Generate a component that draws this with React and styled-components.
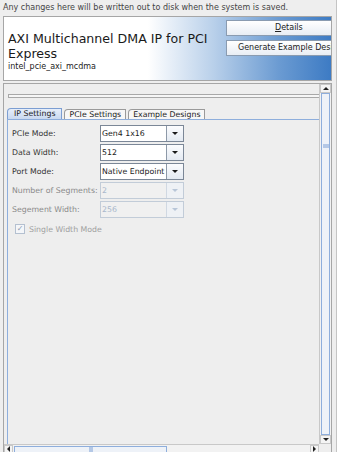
import React from 'react';
import styled, { createGlobalStyle } from 'styled-components';

const Global = createGlobalStyle`
  html, body { margin: 0; padding: 0; background: #eeeeee; }
  * { box-sizing: border-box; }
`;

const Window = styled.div`
  position: relative;
  width: 337px;
  height: 452px;
  overflow: hidden;
  background: #eeeeee;
  font-family: "DejaVu Sans", Verdana, sans-serif;
  color: #333;
  display: flex;
  flex-direction: column;
  border-right: 1px solid #c4c4c4;
`;

const Notice = styled.div`
  height: 16px;
  padding: 3px 0 0 3px;
  font-size: 8px;
  line-height: 10px;
  color: #444;
  white-space: nowrap;
`;

const Header = styled.div`
  margin: 0 4px 0 3px;
  height: 65px;
  border: 1px solid #a6a6a6;
  background: linear-gradient(to right, #ffffff 0%, #ffffff 44%, #b9d0ea 64%, #6b9bd2 84%, #3d7bc4 100%);
  display: flex;
  overflow: hidden;
`;

const TitleBlock = styled.div`
  flex: 1;
  padding: 14px 0 0 4px;
`;

const Title = styled.div`
  font-size: 12.6px;
  line-height: 15px;
  color: #1a1a1a;
  width: 210px;
`;

const Sub = styled.div`
  font-size: 8px;
  line-height: 10px;
  margin-top: 1px;
  color: #222;
`;

const ButtonCol = styled.div`
  width: 105px;
  padding-top: 3px;
  display: flex;
  flex-direction: column;
  gap: 4px;
  flex-shrink: 0;
`;

const HeadButton = styled.div`
  width: 115px;
  height: 16px;
  border: 1px solid #8a9bb0;
  background: linear-gradient(#ffffff, #e8edf4);
  font-size: 8px;
  line-height: 14px;
  color: #222;
  white-space: nowrap;
  padding-left: ${p => p.$pad}px;
`;

const ScrollPane = styled.div`
  margin: 2px 4px 0 3px;
  flex: 1;
  border: 1px solid #a6a6a6;
  border-bottom: none;
  display: grid;
  grid-template-columns: 1fr 12px;
  grid-template-rows: 1fr 8px;
  min-height: 0;
  background: #eeeeee;
`;

const Viewport = styled.div`
  overflow: hidden;
  position: relative;
`;

const Content = styled.div`
  width: 420px;
  padding: 10px 0 0 3px;
  height: 100%;
  display: flex;
  flex-direction: column;
`;

const ThinBar = styled.div`
  margin-left: 1px;
  height: 4px;
  border: 1px solid #a8a8a8;
  background: #f6f6f6;
`;

const TabStrip = styled.div`
  margin-top: 10px;
  display: flex;
  align-items: flex-end;
  height: 11px;
`;

const Tab = styled.div`
  height: ${p => (p.$active ? 11 : 10)}px;
  margin-right: 2px;
  padding: 0 ${p => p.$px}px;
  font-size: 7.8px;
  line-height: 9px;
  color: #222;
  white-space: nowrap;
  border: 1px solid ${p => (p.$active ? '#7c9ed2' : '#9a9a9a')};
  border-bottom: none;
  border-top-left-radius: 4px 4px;
  background: ${p => (p.$active ? 'linear-gradient(#e6eefa, #c9d9f0)' : '#f7f7f7')};
`;

const TabPanel = styled.div`
  flex: 1;
  border-top: 1px solid #8eaedc;
  border-left: 1px solid #8eaedc;
  padding: 5px 0 0 4px;
`;

const Form = styled.div`
  display: grid;
  grid-template-columns: 88px 84px;
  grid-auto-rows: 17px;
  row-gap: 2px;
  align-items: center;
`;

const Label = styled.div`
  font-size: 7.8px;
  color: ${p => (p.$disabled ? '#8a8a8a' : '#333')};
  white-space: nowrap;
`;

const Combo = styled.div`
  height: 17px;
  display: flex;
  border: 1px solid ${p => (p.$disabled ? '#c2ccd8' : '#7b8797')};
  background: ${p => (p.$disabled ? '#f0f0f0' : '#ffffff')};
`;

const ComboText = styled.div`
  flex: 1;
  font-size: 7.8px;
  line-height: 15px;
  padding-left: 1px;
  color: ${p => (p.$disabled ? '#aab8cc' : '#222')};
  white-space: nowrap;
  overflow: hidden;
`;

const ComboArrow = styled.div`
  width: 17px;
  border-left: 1px solid ${p => (p.$disabled ? '#d0d8e2' : '#8d99a8')};
  background: ${p => (p.$disabled ? '#eef1f5' : 'linear-gradient(#fbfcfe, #e4eaf2)')};
  display: flex;
  align-items: center;
  justify-content: center;
`;

const Tri = styled.div`
  width: 0;
  height: 0;
  border-left: 3.5px solid transparent;
  border-right: 3.5px solid transparent;
  border-top: 3.5px solid ${p => (p.$disabled ? '#b8c6d8' : '#1a1a1a')};
  border-bottom: none;
`;

const CheckRow = styled.div`
  margin-top: 6px;
  margin-left: 3px;
  display: flex;
  align-items: center;
  gap: 4px;
  font-size: 7.8px;
  color: #a0a0a0;
`;

const CheckBox = styled.div`
  width: 10px;
  height: 10px;
  border: 1px solid #b4c0d0;
  background: #f4f6f9;
  font-size: 8px;
  line-height: 8px;
  color: #8a9ab0;
  text-align: center;
`;

const VBar = styled.div`
  border-left: 1px solid #c8c8c8;
  display: flex;
  flex-direction: column;
  background: #f2f2f2;
`;

const ArrowBtn = styled.div`
  height: ${p => p.$h || 9}px;
  width: ${p => p.$w || 'auto'};
  display: flex;
  align-items: center;
  justify-content: center;
  background: #f4f4f4;
  border: 1px solid #c8c8c8;
`;

const UpTri = styled.div`
  width: 0;
  height: 0;
  border-left: 3px solid transparent;
  border-right: 3px solid transparent;
  border-bottom: 3px solid #222;
`;

const DownTri = styled(UpTri)`
  border-bottom: none;
  border-top: 3px solid #222;
`;

const LeftTri = styled.div`
  width: 0;
  height: 0;
  border-top: 3px solid transparent;
  border-bottom: 3px solid transparent;
  border-right: 3px solid #222;
`;

const RightTri = styled(LeftTri)`
  border-right: none;
  border-left: 3px solid #222;
`;

const VTrack = styled.div`
  flex: 1;
  padding: 0 1px;
`;

const VThumb = styled.div`
  height: 100%;
  border: 1px solid #8eaedc;
  background: #eef2f8;
  padding-top: 50px;
  display: flex;
  justify-content: center;
`;

const Grip = styled.div`
  width: ${p => p.$w}px;
  height: ${p => p.$h}px;
  background: #b4c8e6;
`;

const HBar = styled.div`
  border-top: 1px solid #c8c8c8;
  display: flex;
  background: #f2f2f2;
`;

const HTrack = styled.div`
  flex: 1;
  padding: 1px 1px 0;
`;

const HThumb = styled.div`
  width: 153px;
  height: 100%;
  border: 1px solid #8eaedc;
  border-bottom: none;
  background: #eef2f8;
  padding-left: 74px;
`;

const Corner = styled.div`
  background: #eeeeee;
`;

const rows = [
  { label: 'PCIe Mode:', value: 'Gen4 1x16' },
  { label: 'Data Width:', value: '512' },
  { label: 'Port Mode:', value: 'Native Endpoint' },
  { label: 'Number of Segments:', value: '2', disabled: true },
  { label: 'Segement Width:', value: '256', disabled: true },
];

export default function App() {
  return (
    <>
      <Global />
      <Window>
        <Notice>Any changes here will be written out to disk when the system is saved.</Notice>
        <Header>
          <TitleBlock>
            <Title>AXI Multichannel DMA IP for PCI Express</Title>
            <Sub>intel_pcie_axi_mcdma</Sub>
          </TitleBlock>
          <ButtonCol>
            <HeadButton $pad={48}><u>D</u>etails</HeadButton>
            <HeadButton $pad={11}>Generate Example Design</HeadButton>
          </ButtonCol>
        </Header>
        <ScrollPane>
          <Viewport>
            <Content>
              <ThinBar />
              <TabStrip>
                <Tab $active $px={6}>IP Settings</Tab>
                <Tab $px={4}>PCIe Settings</Tab>
                <Tab $px={4}>Example Designs</Tab>
              </TabStrip>
              <TabPanel>
                <Form>
                  {rows.map(r => (
                    <React.Fragment key={r.label}>
                      <Label $disabled={r.disabled}>{r.label}</Label>
                      <Combo $disabled={r.disabled}>
                        <ComboText $disabled={r.disabled}>{r.value}</ComboText>
                        <ComboArrow $disabled={r.disabled}>
                          <Tri $disabled={r.disabled} />
                        </ComboArrow>
                      </Combo>
                    </React.Fragment>
                  ))}
                </Form>
                <CheckRow>
                  <CheckBox>✓</CheckBox>
                  Single Width Mode
                </CheckRow>
              </TabPanel>
            </Content>
          </Viewport>
          <VBar>
            <ArrowBtn><UpTri /></ArrowBtn>
            <VTrack>
              <VThumb><Grip $w={6} $h={4} /></VThumb>
            </VTrack>
            <ArrowBtn><DownTri /></ArrowBtn>
          </VBar>
          <HBar>
            <ArrowBtn $h={8} $w="9px"><LeftTri /></ArrowBtn>
            <HTrack>
              <HThumb><Grip $w={4} $h={6} /></HThumb>
            </HTrack>
            <ArrowBtn $h={8} $w="9px"><RightTri /></ArrowBtn>
          </HBar>
          <Corner />
        </ScrollPane>
      </Window>
    </>
  );
}
